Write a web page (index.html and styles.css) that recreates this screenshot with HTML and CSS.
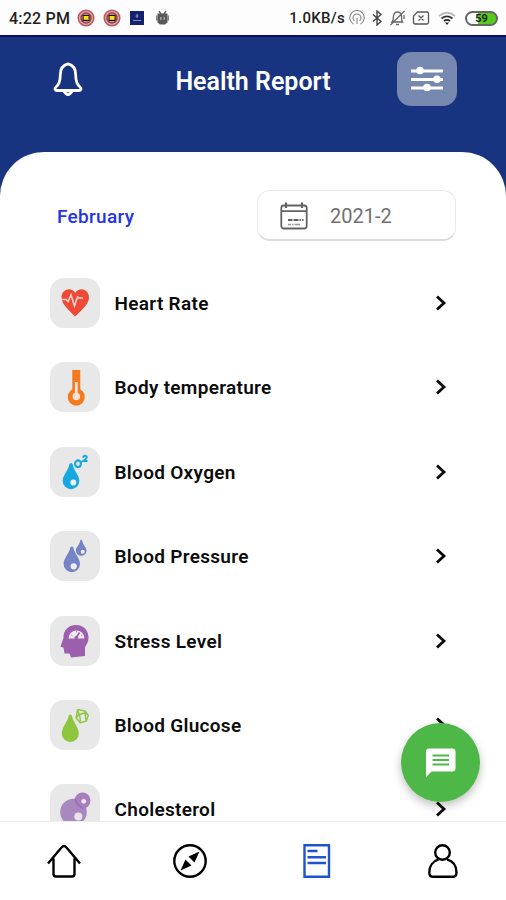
FILE: index.html
```html
<!DOCTYPE html>
<html lang="en">
<head>
	<meta charset="UTF-8">
	<title>Health Report</title>
	<link rel="stylesheet" href="styles.css">
</head>
<body>

	<div class="screen">
		<div class="status">
			<span class="status-time">4:22 PM</span>
			<svg class="status-app" width="18" height="18" viewBox="0 0 18 18">
				<circle cx="9" cy="9" r="7.800" fill="#c3b3ae" stroke="#c9525d" stroke-width="1.500"/>
				<circle cx="9" cy="9" r="5" fill="#c78f86" stroke="#a83c47" stroke-width="1.500"/>
				<rect x="5.600" y="6" width="7" height="6" fill="#1a1208"/>
				<rect x="6.600" y="7" width="5" height="3.800" fill="#f5e11d"/>
			</svg>
			<svg class="status-app" width="18" height="18" viewBox="0 0 18 18">
				<circle cx="9" cy="9" r="7.800" fill="#c3b3ae" stroke="#c9525d" stroke-width="1.500"/>
				<circle cx="9" cy="9" r="5" fill="#c78f86" stroke="#a83c47" stroke-width="1.500"/>
				<rect x="5.600" y="6" width="7" height="6" fill="#1a1208"/>
				<rect x="6.600" y="7" width="5" height="3.800" fill="#f5e11d"/>
			</svg>
			<svg class="status-app" width="18" height="18" viewBox="0 0 18 18">
				<rect x="2" y="2" width="14" height="14" fill="#14216f"/>
				<path d="M9 5v4M7.500 7h3M5 11.500h8" stroke="#7f8cc6" stroke-width="1.200"/>
			</svg>
			<svg class="status-app" width="18" height="18" viewBox="0 0 18 18">
				<path d="M5 2l2 3M12 2l-2 3" stroke="#666" stroke-width="1.400"/>
				<path d="M3.500 4.500h10v9l-2.500 2h-5l-2.500-2z" fill="#585858"/>
				<path d="M2.800 6.500v5M14.200 6.500v5" stroke="#777" stroke-width="1.500"/>
				<path d="M6.800 8v3M10.200 8v3" stroke="#aaa" stroke-width="1.300"/>
			</svg>

			<div class="status-right">
				<span class="status-speed">1.0KB/s</span>
				<svg width="16" height="16" viewBox="0 0 16 16" fill="none" stroke="#888" stroke-width="1.100">
					<path d="M4.500 14a7.200 7.200 0 1 1 7 0M5.300 10.900a4 4 0 1 1 5.400 0"/>
					<path d="M8 8v6"/>
				</svg>
				<svg width="12" height="16" viewBox="0 0 12 16" fill="none" stroke="#444" stroke-width="1.400">
					<path d="M2 4.500l8 7-4 3.500V1l4 3.500-8 7"/>
				</svg>
				<svg width="17" height="16" viewBox="0 0 17 16" fill="none" stroke="#666" stroke-width="1.300">
					<path d="M3 12h10.500c-1.500-2-.7-4-1-6C12 3 10 2 8.500 2S5 3 4.500 6c-.3 2 .2 4-1.500 6zM7 14.500h3M15.500 1L1.500 15M15 5v4"/>
				</svg>
				<svg width="18" height="16" viewBox="0 0 18 16" fill="none" stroke="#555" stroke-width="1.300">
					<path d="M5.500 2H15q1.500 0 1.500 1.500v9Q16.500 14 15 14H3q-1.500 0-1.500-1.500V6zM6.500 5.500l5 5M11.500 5.500l-5 5"/>
				</svg>
				<svg class="wifi" width="18" height="16" viewBox="0 0 18 16" fill="none" stroke-width="1.700">
					<path d="M1 6q8-6.500 16 0" stroke="#bbb"/>
					<path d="M3.500 8.500q5.500-4.300 11 0" stroke="#333"/>
					<path d="M6 11q3-2.200 6 0" stroke="#222"/>
					<path d="M7 12.500h4L9 15z" fill="#222"/>
				</svg>
				<span class="battery">59</span>
			</div>
		</div>

		<header class="header">
			<svg class="bell" width="32" height="36" viewBox="0 0 32 36" fill="none" stroke="#fff" stroke-width="2.800" stroke-linejoin="round">
				<path d="M16 2.800c-5.800 1.300-7.700 5.500-7.700 11 0 6-.7 9.500-4.300 12.200-1.500 1.300-1.300 3.500.8 3.500h22.400c2.100 0 2.300-2.200.8-3.500-3.600-2.700-4.300-6.200-4.300-12.200 0-5.500-1.900-9.700-7.700-11z"/>
				<path d="M11.500 29.500q4.500 8 9 0z"/>
			</svg>
			<h1>Health Report</h1>
			<button class="filter" type="button">
				<svg width="34" height="28" viewBox="0 0 34 28" stroke="#fff" stroke-width="2.800" fill="#fff">
					<path d="M1 6h32M1 14.500h32M1 23h32"/>
					<g stroke="none">
						<circle cx="10" cy="5.500" r="3.800"/>
						<circle cx="27" cy="14.300" r="3.800"/>
						<circle cx="17" cy="22.500" r="3.800"/>
					</g>
				</svg>
			</button>
		</header>

		<main class="sheet">
			<div class="period">
				<span class="month">February</span>
				<div class="date">
					<svg width="28" height="28" viewBox="0 0 28 28" fill="none" stroke="#626262" stroke-width="1.800">
						<rect x="1.300" y="3.500" width="25.400" height="23" rx="2.500"/>
						<path d="M1.500 9.200h25"/>
						<path d="M6 .500v5.500M22 .500v5.500" stroke-width="2.200"/>
						<path d="M8 18h4.500M13.500 18h5M19.500 18h1.500M22 18h1.500" stroke-width="2"/>
						<path d="M8 22.500h3M12 22.500h1.500M14.500 22.500h5.500" stroke="#999" stroke-width="1.300"/>
					</svg>
					<span>2021-2</span>
				</div>
			</div>

			<ul class="list">
				<li class="item">
					<svg class="tile" viewBox="0 0 50 50">
						<path d="M25 38.500C20 33 11.500 26.500 11.500 19.500c0-8.500 10-11 13.700-4.500 3.800-6.500 13.800-4 13.800 4.500 0 7-8.500 13.500-14 19z" fill="#ee4a35"/>
						<path d="M11 21.500h5l2 2 3-6.500 3.500 11 3-9 1.500 1h4" fill="none" stroke="#f8d4cd" stroke-width="1.600"/>
					</svg>
					<span class="name">Heart Rate</span>
					<svg class="arrow" viewBox="0 0 12 18"><path d="M2 2.500l7 6.500-7 6.500"/></svg>
				</li>
				<li class="item">
					<svg class="tile" viewBox="0 0 50 50">
						<path d="M22.300 8h8v19.500a8.500 8.500 0 1 1-8 0z" fill="#f47a1c"/>
						<path d="M26.300 20v14" stroke="#f4e4d8" stroke-width="2.800"/>
						<circle cx="26.300" cy="34.500" r="3.700" fill="#f4e4d8"/>
					</svg>
					<span class="name">Body temperature</span>
					<svg class="arrow" viewBox="0 0 12 18"><path d="M2 2.500l7 6.500-7 6.500"/></svg>
				</li>
				<li class="item">
					<svg class="tile" viewBox="0 0 50 50">
						<path d="M19.500 17q1.500-2 3 0c1.200 6.500 6.800 11 6.800 17a8.300 8.300 0 0 1-16.600 0c0-6 5.600-10.500 6.800-17z" fill="#17a8e1"/>
						<circle cx="23.300" cy="35.500" r="3" fill="#eef6fa"/>
						<ellipse cx="28" cy="16.800" rx="2.900" ry="3.400" fill="none" stroke="#17a8e1" stroke-width="2.200"/>
						<path d="M32.700 10.500q2-3 4-.8.500 1.800-3.700 4.300h4.500" fill="none" stroke="#17a8e1" stroke-width="2"/>
					</svg>
					<span class="name">Blood Oxygen</span>
					<svg class="arrow" viewBox="0 0 12 18"><path d="M2 2.500l7 6.500-7 6.500"/></svg>
				</li>
				<li class="item">
					<svg class="tile" viewBox="0 0 50 50">
						<g fill="#7484c4">
							<path d="M20.300 16.500q1.500-2 3 0c1 6 6.700 10.500 6.700 16.500a8.200 8.200 0 0 1-16.400 0c0-6 5.700-10.500 6.700-16.500z"/>
							<path d="M30.200 9.500q1-1.500 2 0c.6 4.500 4.300 6.500 4.300 10a5.300 5.300 0 0 1-10.600 0c0-3.500 3.700-5.500 4.300-10z"/>
						</g>
						<g fill="#f0f1f7">
							<circle cx="23.700" cy="35.300" r="3.100"/>
							<circle cx="32.700" cy="20.700" r="2"/>
						</g>
					</svg>
					<span class="name">Blood Pressure</span>
					<svg class="arrow" viewBox="0 0 12 18"><path d="M2 2.500l7 6.500-7 6.500"/></svg>
				</li>
				<li class="item">
					<svg class="tile" viewBox="0 0 50 50">
						<path d="M13.500 22c-.5-7 4.500-13 12.500-13s12.500 6 12.500 12.500c0 5-2.500 7.500-3.500 10v8.500l-14 1.500-1.500-4h-5l-1-6-3-.8q1.300-4 3-8.700z" fill="#9b5fae"/>
						<path d="M18.500 22.500a8 8 0 0 1 16 0z" fill="#f2ebf4"/>
						<path d="M26 22l3.500-5.500" stroke="#9b5fae" stroke-width="1.600"/>
						<path d="M21 19l1.500.8M26.500 15v1.500M32.500 19l-1.500.8" stroke="#b48bc2" stroke-width="1"/>
						<circle cx="26.300" cy="21.500" r="1.800" fill="#9b5fae"/>
					</svg>
					<span class="name">Stress Level</span>
					<svg class="arrow" viewBox="0 0 12 18"><path d="M2 2.500l7 6.500-7 6.500"/></svg>
				</li>
				<li class="item">
					<svg class="tile" viewBox="0 0 50 50">
						<path d="M18.800 15.500q1.500-2 3 0c1.200 6.500 7 11.500 7 18a8.500 8.500 0 0 1-17 0c0-6.500 5.800-11.500 7-18z" fill="#8cc63f"/>
						<path d="M27.500 9.500l7.500 1.500 3.300 4.500-2 5.500-6 1.800-4.300-5zM27.500 9.500l1.500 5 5.500-1.500 3.500 2M29 14.500l-2.500 3M29.500 14.500l1 7M35 13.500l1 7" fill="none" stroke="#8cc63f" stroke-width="1.400" stroke-linejoin="round"/>
					</svg>
					<span class="name">Blood Glucose</span>
					<svg class="arrow" viewBox="0 0 12 18"><path d="M2 2.500l7 6.500-7 6.500"/></svg>
				</li>
				<li class="item">
					<svg class="tile" viewBox="0 0 50 50">
						<circle cx="23.500" cy="28" r="13.300" fill="#a987bf"/>
						<circle cx="32.500" cy="16.500" r="8" fill="#a67fbc"/>
						<path d="M25 14.500q1 6 8.500 10.500" fill="none" stroke="#9269ad" stroke-width="1"/>
						<circle cx="33.700" cy="17.300" r="2.400" fill="#f0e9f4"/>
						<circle cx="28.300" cy="32.500" r="4" fill="#e9e4ec"/>
					</svg>
					<span class="name">Cholesterol</span>
					<svg class="arrow" viewBox="0 0 12 18"><path d="M2 2.500l7 6.500-7 6.500"/></svg>
				</li>
			</ul>
		</main>

		<nav class="tabs">
			<a class="tab">
				<svg width="36" height="36" viewBox="0 0 36 36">
					<path d="M2 20.500L15.500 4.500q2.500-3 5 0L34 20.500M7.500 15.500V31q0 2.500 2.500 2.500h16q2.500 0 2.500-2.500V15.500"/>
				</svg>
			</a>
			<a class="tab">
				<svg width="36" height="36" viewBox="0 0 36 36">
					<circle cx="18" cy="18" r="15.700"/>
					<path d="M27.500 8.500L16.500 13.500l6 6zM8.500 27.500l5-11 6 6z" fill="#000" stroke="none"/>
				</svg>
			</a>
			<a class="tab tab-active">
				<svg width="36" height="36" viewBox="0 0 36 36">
					<path d="M5.500 2.200h24.500v31.600H5.500z"/>
					<path d="M8.500 8h10M8.500 14.200h18.500M8.500 20h18.500"/>
				</svg>
			</a>
			<a class="tab">
				<svg width="36" height="36" viewBox="0 0 36 36">
					<circle cx="17.500" cy="9.500" r="7.300"/>
					<path d="M13.500 16.300C8 18 4.300 23 4.300 29.500q0 4.300 4 4.300h19.200q4 0 4-4.300c0-6.500-3.500-11.500-9.500-13.200"/>
				</svg>
			</a>
		</nav>

		<button class="chat" type="button">
			<svg width="32" height="32" viewBox="0 0 32 32">
				<path d="M4 1.500h23.500q3 0 3 3v17q0 3-3 3h-21L1 30V4.500q0-3 3-3z" fill="#fff"/>
				<path d="M7.500 8.500h16.500M7.500 13h16.500M7.500 17.500h16.500" stroke="#4db848" stroke-width="2.200"/>
			</svg>
		</button>
	</div>

</body>
</html>
```
FILE: styles.css
```css
* {
	box-sizing: border-box;
}
body {
	margin: 0;
	font-family: Roboto, "Liberation Sans", sans-serif;
	background-color: #fff;
}
h1 {
	margin: 0;
	font-size: 25px;
	font-weight: 600;
	line-height: 30px;
	color: #fff;
}
button {
	padding: 0;
	border: none;
	display: flex;
	align-items: center;
	justify-content: center;
	cursor: pointer;
}
svg {
	display: block;
	flex: none;
}
.screen {
	position: relative;
	width: 506px;
	height: 900px;
	display: flex;
	flex-direction: column;
	overflow: hidden;
	background-color: #18337f;
}
.status {
	flex: none;
	height: 37px;
	padding: 2px 8px 1px 9px;
	display: flex;
	align-items: center;
	background-color: #fdfdfd;
	border-bottom: 2px solid #08106e;
	color: #222;
}
.status-time {
	width: 68px;
	font-size: 16px;
	font-weight: 500;
	letter-spacing: .2px;
	white-space: nowrap;
}
.status-app {
	margin-right: 7.500px;
}
.status-right {
	margin-left: auto;
	display: flex;
	align-items: center;
	gap: 6px;
}
.status-speed {
	margin-right: -2px;
	font-size: 15px;
	font-weight: 500;
	letter-spacing: .3px;
}
.wifi {
	margin-left: 2px;
}
.battery {
	margin-left: 3px;
	width: 33px;
	height: 15px;
	border: 2px solid #666;
	border-radius: 8px;
	background: linear-gradient(to right, #fff 38%, #55cc1c 38%);
	font-size: 11px;
	font-weight: 700;
	line-height: 11px;
	text-align: center;
}
.header {
	flex: none;
	height: 115px;
	padding: 15px 49px 0 52px;
	display: flex;
	align-items: flex-start;
	justify-content: space-between;
}
.header h1 {
	margin: 15px 0 0 25px;
	white-space: nowrap;
}
.bell {
	margin-top: 9px;
}
.filter {
	width: 60px;
	height: 54px;
	border-radius: 14px;
	background-color: #7687b0;
}
.sheet {
	flex: 1;
	min-height: 0;
	padding: 38px 50px 0;
	overflow: hidden;
	border-radius: 44px 44px 0 0;
	background-color: #fff;
}
.period {
	margin-bottom: 37px;
	padding-left: 7px;
	height: 51px;
	display: flex;
	align-items: center;
	justify-content: space-between;
}
.month {
	padding-top: 1px;
	font-size: 19px;
	font-weight: 500;
	letter-spacing: .3px;
	color: #2334e8;
}
.date {
	width: 199px;
	height: 51px;
	padding: 2px 0 0 22px;
	display: flex;
	align-items: center;
	gap: 22px;
	border: 1px solid #e9e9e9;
	border-bottom: 2px solid #dcdcdc;
	border-radius: 13px;
	font-size: 20px;
	color: #707070;
}
.list {
	margin: 0;
	padding: 0;
	list-style: none;
}
.item {
	margin-bottom: 34.400px;
	height: 50px;
	display: flex;
	align-items: center;
}
.tile {
	width: 50px;
	height: 50px;
	border-radius: 14px;
	background-color: #e8e8e8;
}
.name {
	margin: 1px auto 0 14.500px;
	font-size: 19px;
	font-weight: 600;
	letter-spacing: .3px;
	color: #0c0c0c;
	white-space: nowrap;
}
.arrow {
	margin-right: 9px;
	width: 12px;
	height: 18px;
	fill: none;
	stroke: #0a0a0a;
	stroke-width: 2.800;
}
.tabs {
	flex: none;
	height: 79px;
	padding-left: 1px;
	display: flex;
	border-top: 1px solid #eee;
	background-color: #fff;
}
.tab {
	flex: 1;
	padding-top: 21px;
	display: flex;
	justify-content: center;
}
.tab svg {
	fill: none;
	stroke: #000;
	stroke-width: 2.400;
	stroke-linejoin: round;
}
.tab-active svg {
	stroke: #1c55cf;
	stroke-linejoin: miter;
}
.chat {
	position: absolute;
	right: 26px;
	bottom: 98px;
	width: 79px;
	height: 79px;
	border-radius: 50%;
	background-color: #4db848;
	box-shadow: 0 4px 10px rgba(0, 0, 0, .25);
}
```
